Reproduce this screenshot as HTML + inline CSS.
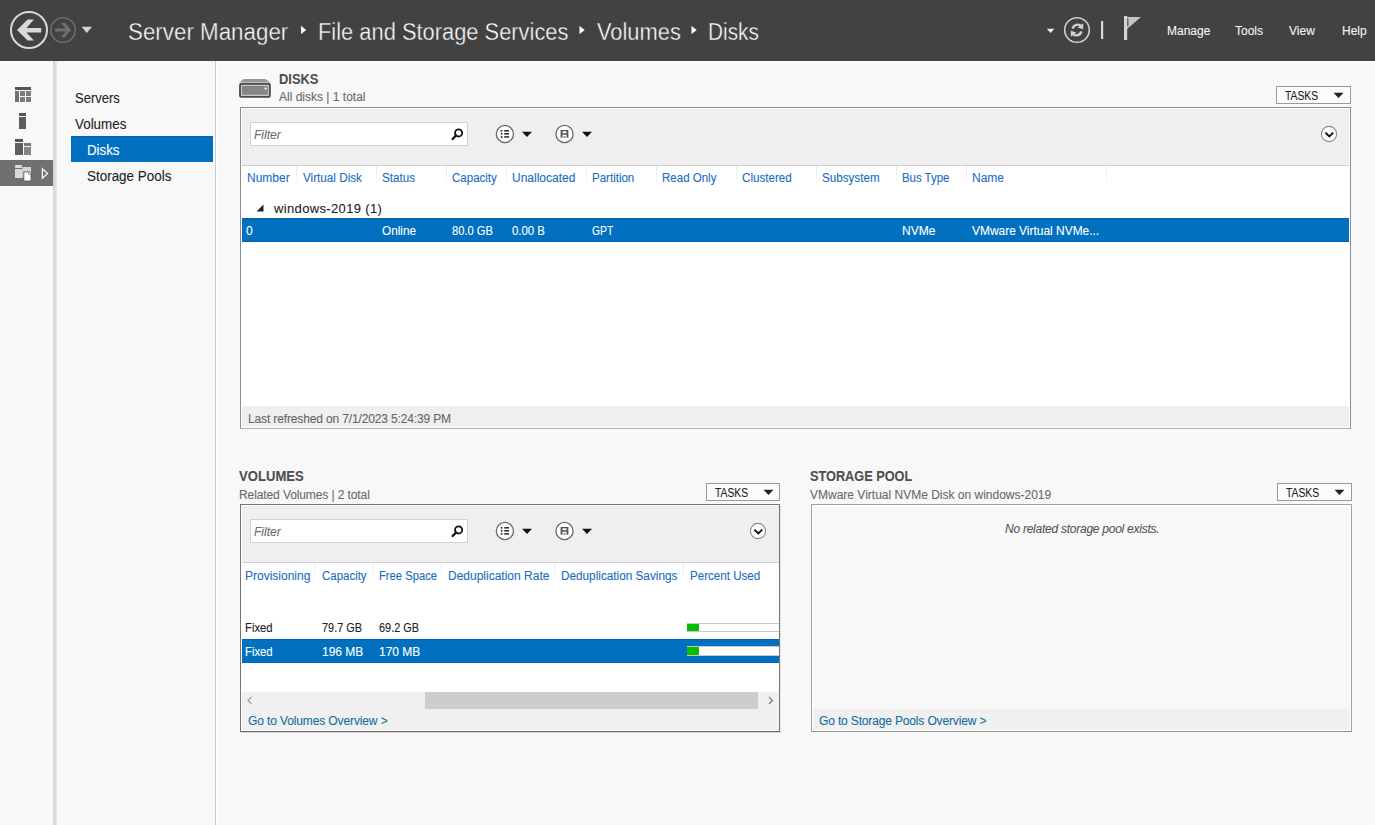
<!DOCTYPE html>
<html><head><meta charset="utf-8"><style>
html,body{margin:0;padding:0}
body{width:1375px;height:825px;overflow:hidden;position:relative;background:#f8f8f8;font-family:"Liberation Sans",sans-serif}
body>div,body>svg{position:absolute;box-sizing:content-box}
.t{white-space:nowrap;line-height:1}
.lt{-webkit-text-stroke:0.35px #424242}
.t:not(.lt){-webkit-text-stroke:0.1px currentColor}
</style></head><body>
<div style="left:0px;top:0px;width:1375px;height:61px;background:#424242;"></div>
<svg style="left:0px;top:0px" width="100" height="61" viewBox="0 0 100 61"><circle cx="29" cy="30" r="18" fill="none" stroke="#d9d9d9" stroke-width="2"/><polygon points="17,30 27.6,19.6 34,19.6 26.4,28 41.2,28 41.2,32.6 26.4,32.6 34,40.4 27.6,40.4" fill="#d9d9d9"/><circle cx="63" cy="30" r="12.3" fill="none" stroke="#6e6e6e" stroke-width="1.6"/><polygon points="71,30 65,22.8 61,22.8 65.5,28.6 55,28.6 55,31.6 65.5,31.6 61,37.2 65,37.2" fill="#6e6e6e"/><polygon points="81.6,26.8 92,26.8 86.8,33" fill="#d6d6d6"/></svg>
<div class="t lt" style="left:128px;top:21px;font-size:23px;color:#fafafa;transform:scaleX(0.972);transform-origin:0 0;">Server Manager</div>
<svg style="left:296px;top:20px" width="14" height="20" viewBox="0 0 14 20"><polygon points="5,5.8 10.2,10 5,14.2" fill="#f6f6f6"/></svg>
<div class="t lt" style="left:318px;top:21px;font-size:23px;color:#fafafa;transform:scaleX(0.951);transform-origin:0 0;">File and Storage Services</div>
<svg style="left:575px;top:20px" width="14" height="20" viewBox="0 0 14 20"><polygon points="4.5,5.8 9.7,10 4.5,14.2" fill="#f6f6f6"/></svg>
<div class="t lt" style="left:597px;top:21px;font-size:23px;color:#fafafa;transform:scaleX(0.95);transform-origin:0 0;">Volumes</div>
<svg style="left:687px;top:20px" width="14" height="20" viewBox="0 0 14 20"><polygon points="4.5,5.8 9.7,10 4.5,14.2" fill="#f6f6f6"/></svg>
<div class="t lt" style="left:708px;top:21px;font-size:23px;color:#fafafa;transform:scaleX(0.904);transform-origin:0 0;">Disks</div>
<svg style="left:1040px;top:0px" width="110" height="61" viewBox="0 0 110 61"><polygon points="6.8,28.8 14.4,28.8 10.6,33" fill="#f0f0f0"/><circle cx="37" cy="30" r="12.3" fill="none" stroke="#d0d0d0" stroke-width="1.6"/><path d="M32.6,28.6 A5.2,5.2 0 0 1 41.3,26.2" fill="none" stroke="#d0d0d0" stroke-width="2.4"/><polygon points="43.2,23.2 43.2,29.2 37.6,27.6" fill="#d0d0d0"/><path d="M41.4,31.4 A5.2,5.2 0 0 1 32.7,33.8" fill="none" stroke="#d0d0d0" stroke-width="2.4"/><polygon points="30.8,36.8 30.8,30.8 36.4,32.4" fill="#d0d0d0"/><rect x="61" y="21" width="2.2" height="18" fill="#d8d8d8"/><rect x="84" y="16" width="3.2" height="24" fill="#d4d4d4"/><polygon points="87,17 101,17 87,29" fill="#c6c6c6"/><rect x="87.2" y="18.2" width="1.2" height="8" fill="#505050"/></svg>
<div class="t " style="left:1167px;top:25px;font-size:12px;color:#f4f4f4;">Manage</div>
<div class="t " style="left:1235px;top:25px;font-size:12px;color:#f4f4f4;">Tools</div>
<div class="t " style="left:1289px;top:25px;font-size:12px;color:#f4f4f4;">View</div>
<div class="t " style="left:1342px;top:25px;font-size:12px;color:#f4f4f4;">Help</div>
<div style="left:53px;top:61px;width:4px;height:764px;background:linear-gradient(to right,#d2d2d2,#e6e6e6);"></div>
<div style="left:0px;top:160px;width:53px;height:26px;background:#707070;"></div>
<svg style="left:0px;top:61px" width="53" height="140" viewBox="0 0 53 140"><rect x="15" y="26" width="16" height="3" fill="#555"/><rect x="15" y="30" width="4" height="11" fill="#707070"/><rect x="20" y="30" width="5" height="5" fill="#7c7c7c"/><rect x="26" y="30" width="5" height="5" fill="#7c7c7c"/><rect x="20" y="36" width="5" height="5" fill="#7c7c7c"/><rect x="26" y="36" width="5" height="5" fill="#7c7c7c"/><rect x="19" y="52" width="7" height="3" fill="#555"/><rect x="19" y="56" width="7" height="12" fill="#5e5e5e"/><rect x="15" y="78" width="8" height="3" fill="#555"/><rect x="15" y="82" width="8" height="12" fill="#5e5e5e"/><rect x="24" y="82" width="7" height="3" fill="#777"/><rect x="24" y="86" width="7" height="8" fill="#858585"/><rect x="15" y="104" width="7" height="3" rx="1" fill="#dadada"/><rect x="22.3" y="106" width="8.7" height="10" fill="#d6d6d6"/><rect x="15" y="108" width="7.6" height="9" fill="#d9d9d9"/><path d="M23.8,110.8 H29.2 L31,112.6 V120 H23.8 Z" fill="#ffffff" stroke="#5c5c5c" stroke-width="0.9"/><circle cx="29.6" cy="112.4" r="1.2" fill="#ffffff" stroke="#6a6a6a" stroke-width="0.8"/><polygon points="42.4,107.8 47.6,112.5 42.4,117.2" fill="none" stroke="#f4f4f4" stroke-width="1.3"/></svg>
<div style="left:215px;top:61px;width:1px;height:764px;background:#cdcdcd;"></div>
<div style="left:216px;top:61px;width:1px;height:764px;background:#fdfdfd;"></div>
<div class="t " style="left:75px;top:91px;font-size:14px;color:#222;transform:scaleX(0.928);transform-origin:0 0;">Servers</div>
<div class="t " style="left:75px;top:117px;font-size:14px;color:#222;transform:scaleX(0.956);transform-origin:0 0;">Volumes</div>
<div style="left:71px;top:136px;width:142px;height:26px;background:#0070bf;border-top:1px solid #0062b2;box-sizing:border-box"></div>
<div class="t " style="left:87px;top:143px;font-size:14px;color:#fff;transform:scaleX(0.95);transform-origin:0 0;">Disks</div>
<div class="t " style="left:87px;top:169px;font-size:14px;color:#222;transform:scaleX(0.96);transform-origin:0 0;">Storage Pools</div>
<svg style="left:235px;top:74px" width="40" height="28" viewBox="0 0 40 28"><path d="M4.3,8.6 L8.8,4.9 H30.2 L35.6,8.6 Z" fill="#989898"/><rect x="4.3" y="8.1" width="31.3" height="0.9" fill="#c4c4c4"/><rect x="4.1" y="9" width="31.7" height="14.7" rx="2" fill="#4a4a4a"/><rect x="5.9" y="10.8" width="28.1" height="11.1" rx="1" fill="#c8c8c8"/><rect x="7" y="11.9" width="26" height="8.9" rx="1" fill="#858585"/><rect x="29.6" y="13.6" width="1.9" height="1.9" fill="#fff"/></svg>
<div class="t " style="left:279px;top:72px;font-size:14px;color:#4e4e4e;font-weight:700;transform:scaleX(0.92);transform-origin:0 0;">DISKS</div>
<div class="t " style="left:279px;top:91px;font-size:12px;color:#6a6a6a;">All disks | 1 total</div>
<div style="left:1276px;top:86px;width:73px;height:16px;border:1px solid #9a9a9a;background:#fbfbfb;"></div>
<div class="t " style="left:1285px;top:90px;font-size:12px;color:#222;transform:scaleX(0.86);transform-origin:0 0;">TASKS</div>
<svg style="left:1333px;top:92px" width="12" height="7" viewBox="0 0 12 7"><polygon points="0.5,0.8 10.5,0.8 5.5,6" fill="#222"/></svg>
<div style="left:240px;top:107px;width:1109px;height:320px;border:1px solid #8c8c8c;border-bottom-color:#b0b0b0;background:#fff;box-shadow:inset 0 0 0 1px #fff"></div>
<div style="left:242px;top:109px;width:1107px;height:56px;background:#efefef;"></div>
<div style="left:242px;top:165px;width:1107px;height:1px;background:#d0d0d0;"></div>
<div style="left:250px;top:122px;width:216px;height:22px;border:1px solid #d2d2d2;background:#fff;"></div>
<div class="t " style="left:254px;top:129px;font-size:12px;color:#6d6d6d;font-style:italic;">Filter</div>
<svg style="left:448px;top:125px" width="18" height="18" viewBox="0 0 18 18"><circle cx="10.6" cy="7.9" r="3.6" fill="none" stroke="#111" stroke-width="1.8"/><line x1="8.2" y1="10.4" x2="4.6" y2="14" stroke="#111" stroke-width="2.3" stroke-linecap="round"/></svg>
<svg style="left:493px;top:122px" width="22" height="22" viewBox="0 0 22 22"><circle cx="11.9" cy="12" r="8.6" fill="#fff" stroke="#6a6a6a" stroke-width="1.3"/><rect x="7.8" y="7.9" width="1.6" height="1.8" fill="#333"/><rect x="11.2" y="8" width="4.8" height="1.6" fill="#333"/><rect x="7.8" y="10.9" width="1.6" height="1.8" fill="#333"/><rect x="11.2" y="11" width="4.8" height="1.6" fill="#333"/><rect x="7.8" y="14.0" width="1.6" height="1.8" fill="#333"/><rect x="11.2" y="14.1" width="4.8" height="1.6" fill="#333"/></svg>
<svg style="left:521px;top:130px" width="12" height="8" viewBox="0 0 12 8"><polygon points="1,1.7 11,1.7 6,7" fill="#111"/></svg>
<svg style="left:553px;top:122px" width="22" height="22" viewBox="0 0 22 22"><circle cx="11.5" cy="12" r="8.6" fill="#fff" stroke="#6a6a6a" stroke-width="1.3"/><path d="M7.6,7.9 h7.8 v7.8 h-7.8 z M9.5,9.3 v2.0 h4.0 v-2.0 z M9.5,12.8 v2.9 h4.0 v-2.9 z" fill="#555" fill-rule="evenodd"/><rect x="10.6" y="14.3" width="1.8" height="1.4" fill="#555"/></svg>
<svg style="left:581px;top:130px" width="12" height="8" viewBox="0 0 12 8"><polygon points="1,1.7 11,1.7 6,7" fill="#111"/></svg>
<svg style="left:1319px;top:124px" width="20" height="20" viewBox="0 0 20 20"><circle cx="10" cy="10" r="7.6" fill="#fdfdfd" stroke="#8a8a8a" stroke-width="1.1"/><polyline points="6.4,8.6 10.3,12.4 14.2,8.6" fill="none" stroke="#111" stroke-width="2"/></svg>
<div style="left:296px;top:166px;width:1px;height:20px;background:linear-gradient(#e6e6e6,#ffffff);"></div>
<div style="left:376px;top:166px;width:1px;height:20px;background:linear-gradient(#e6e6e6,#ffffff);"></div>
<div style="left:446px;top:166px;width:1px;height:20px;background:linear-gradient(#e6e6e6,#ffffff);"></div>
<div style="left:506px;top:166px;width:1px;height:20px;background:linear-gradient(#e6e6e6,#ffffff);"></div>
<div style="left:586px;top:166px;width:1px;height:20px;background:linear-gradient(#e6e6e6,#ffffff);"></div>
<div style="left:656px;top:166px;width:1px;height:20px;background:linear-gradient(#e6e6e6,#ffffff);"></div>
<div style="left:736px;top:166px;width:1px;height:20px;background:linear-gradient(#e6e6e6,#ffffff);"></div>
<div style="left:816px;top:166px;width:1px;height:20px;background:linear-gradient(#e6e6e6,#ffffff);"></div>
<div style="left:896px;top:166px;width:1px;height:20px;background:linear-gradient(#e6e6e6,#ffffff);"></div>
<div style="left:966px;top:166px;width:1px;height:20px;background:linear-gradient(#e6e6e6,#ffffff);"></div>
<div style="left:1106px;top:166px;width:1px;height:20px;background:linear-gradient(#e6e6e6,#ffffff);"></div>
<div class="t " style="left:247px;top:172px;font-size:12px;color:#1c6dbf;">Number</div>
<div class="t " style="left:303px;top:172px;font-size:12px;color:#1c6dbf;transform:scaleX(0.975);transform-origin:0 0;">Virtual Disk</div>
<div class="t " style="left:382px;top:172px;font-size:12px;color:#1c6dbf;transform:scaleX(0.97);transform-origin:0 0;">Status</div>
<div class="t " style="left:452px;top:172px;font-size:12px;color:#1c6dbf;transform:scaleX(0.96);transform-origin:0 0;">Capacity</div>
<div class="t " style="left:512px;top:172px;font-size:12px;color:#1c6dbf;">Unallocated</div>
<div class="t " style="left:592px;top:172px;font-size:12px;color:#1c6dbf;transform:scaleX(0.96);transform-origin:0 0;">Partition</div>
<div class="t " style="left:662px;top:172px;font-size:12px;color:#1c6dbf;transform:scaleX(0.96);transform-origin:0 0;">Read Only</div>
<div class="t " style="left:742px;top:172px;font-size:12px;color:#1c6dbf;transform:scaleX(0.97);transform-origin:0 0;">Clustered</div>
<div class="t " style="left:822px;top:172px;font-size:12px;color:#1c6dbf;transform:scaleX(0.97);transform-origin:0 0;">Subsystem</div>
<div class="t " style="left:902px;top:172px;font-size:12px;color:#1c6dbf;transform:scaleX(0.95);transform-origin:0 0;">Bus Type</div>
<div class="t " style="left:972px;top:172px;font-size:12px;color:#1c6dbf;">Name</div>
<svg style="left:254px;top:202px" width="12" height="12" viewBox="0 0 12 12"><polygon points="9.5,2.5 9.5,9.5 2.5,9.5" fill="#222"/></svg>
<div class="t " style="left:274px;top:202px;font-size:13px;color:#222;letter-spacing:0.35px;">windows-2019 (1)</div>
<div style="left:242px;top:218px;width:1107px;height:24px;background:#0070bf;border-top:1px solid #0062b2;border-bottom:1px solid #0062b2;box-sizing:border-box"></div>
<div class="t " style="left:246px;top:225px;font-size:12px;color:#fff;">0</div>
<div class="t " style="left:382px;top:225px;font-size:12px;color:#fff;transform:scaleX(0.98);transform-origin:0 0;">Online</div>
<div class="t " style="left:452px;top:225px;font-size:12px;color:#fff;transform:scaleX(0.93);transform-origin:0 0;">80.0 GB</div>
<div class="t " style="left:512px;top:225px;font-size:12px;color:#fff;transform:scaleX(0.95);transform-origin:0 0;">0.00 B</div>
<div class="t " style="left:592px;top:225px;font-size:12px;color:#fff;transform:scaleX(0.86);transform-origin:0 0;">GPT</div>
<div class="t " style="left:902px;top:225px;font-size:12px;color:#fff;">NVMe</div>
<div class="t " style="left:972px;top:225px;font-size:12px;color:#fff;transform:scaleX(0.995);transform-origin:0 0;">VMware Virtual NVMe...</div>
<div style="left:242px;top:406px;width:1107px;height:21px;background:#efefef;"></div>
<div class="t " style="left:248px;top:413px;font-size:12px;color:#666;letter-spacing:-0.14px;">Last refreshed on 7/1/2023 5:24:39 PM</div>
<div class="t " style="left:239px;top:469px;font-size:14px;color:#4e4e4e;font-weight:700;transform:scaleX(0.936);transform-origin:0 0;">VOLUMES</div>
<div class="t " style="left:239px;top:489px;font-size:12px;color:#6a6a6a;letter-spacing:-0.1px;">Related Volumes | 2 total</div>
<div style="left:706px;top:483px;width:72px;height:16px;border:1px solid #9a9a9a;background:#fbfbfb;"></div>
<div class="t " style="left:715px;top:487px;font-size:12px;color:#222;transform:scaleX(0.86);transform-origin:0 0;">TASKS</div>
<svg style="left:763px;top:489px" width="12" height="7" viewBox="0 0 12 7"><polygon points="0.5,0.8 10.5,0.8 5.5,6" fill="#222"/></svg>
<div style="left:240px;top:504px;width:538px;height:226px;border:1px solid #757575;border-bottom-color:#6a6a6a;background:#fff;box-shadow:inset 0 0 0 1px #fff"></div>
<div style="left:780px;top:505px;width:1px;height:227px;background:#e6e6e6"></div><div style="left:241px;top:732px;width:541px;height:1px;background:#d8d8d8"></div>
<div style="left:242px;top:506px;width:537px;height:56px;background:#efefef;"></div>
<div style="left:242px;top:562px;width:537px;height:1px;background:#d0d0d0;"></div>
<div style="left:250px;top:519px;width:216px;height:22px;border:1px solid #d2d2d2;background:#fff;"></div>
<div class="t " style="left:254px;top:526px;font-size:12px;color:#6d6d6d;font-style:italic;">Filter</div>
<svg style="left:448px;top:522px" width="18" height="18" viewBox="0 0 18 18"><circle cx="10.6" cy="7.9" r="3.6" fill="none" stroke="#111" stroke-width="1.8"/><line x1="8.2" y1="10.4" x2="4.6" y2="14" stroke="#111" stroke-width="2.3" stroke-linecap="round"/></svg>
<svg style="left:493px;top:519px" width="22" height="22" viewBox="0 0 22 22"><circle cx="11.9" cy="12" r="8.6" fill="#fff" stroke="#6a6a6a" stroke-width="1.3"/><rect x="7.8" y="7.9" width="1.6" height="1.8" fill="#333"/><rect x="11.2" y="8" width="4.8" height="1.6" fill="#333"/><rect x="7.8" y="10.9" width="1.6" height="1.8" fill="#333"/><rect x="11.2" y="11" width="4.8" height="1.6" fill="#333"/><rect x="7.8" y="14.0" width="1.6" height="1.8" fill="#333"/><rect x="11.2" y="14.1" width="4.8" height="1.6" fill="#333"/></svg>
<svg style="left:521px;top:527px" width="12" height="8" viewBox="0 0 12 8"><polygon points="1,1.7 11,1.7 6,7" fill="#111"/></svg>
<svg style="left:553px;top:519px" width="22" height="22" viewBox="0 0 22 22"><circle cx="11.5" cy="12" r="8.6" fill="#fff" stroke="#6a6a6a" stroke-width="1.3"/><path d="M7.6,7.9 h7.8 v7.8 h-7.8 z M9.5,9.3 v2.0 h4.0 v-2.0 z M9.5,12.8 v2.9 h4.0 v-2.9 z" fill="#555" fill-rule="evenodd"/><rect x="10.6" y="14.3" width="1.8" height="1.4" fill="#555"/></svg>
<svg style="left:581px;top:527px" width="12" height="8" viewBox="0 0 12 8"><polygon points="1,1.7 11,1.7 6,7" fill="#111"/></svg>
<svg style="left:748px;top:521px" width="20" height="20" viewBox="0 0 20 20"><circle cx="10" cy="10" r="7.6" fill="#fdfdfd" stroke="#8a8a8a" stroke-width="1.1"/><polyline points="6.4,8.6 10.3,12.4 14.2,8.6" fill="none" stroke="#111" stroke-width="2"/></svg>
<div style="left:315px;top:563px;width:1px;height:20px;background:linear-gradient(#e6e6e6,#ffffff);"></div>
<div style="left:372px;top:563px;width:1px;height:20px;background:linear-gradient(#e6e6e6,#ffffff);"></div>
<div style="left:441px;top:563px;width:1px;height:20px;background:linear-gradient(#e6e6e6,#ffffff);"></div>
<div style="left:554px;top:563px;width:1px;height:20px;background:linear-gradient(#e6e6e6,#ffffff);"></div>
<div style="left:683px;top:563px;width:1px;height:20px;background:linear-gradient(#e6e6e6,#ffffff);"></div>
<div class="t " style="left:245px;top:570px;font-size:12px;color:#1c6dbf;">Provisioning</div>
<div class="t " style="left:322px;top:570px;font-size:12px;color:#1c6dbf;transform:scaleX(0.955);transform-origin:0 0;">Capacity</div>
<div class="t " style="left:379px;top:570px;font-size:12px;color:#1c6dbf;transform:scaleX(0.935);transform-origin:0 0;">Free Space</div>
<div class="t " style="left:448px;top:570px;font-size:12px;color:#1c6dbf;">Deduplication Rate</div>
<div class="t " style="left:561px;top:570px;font-size:12px;color:#1c6dbf;transform:scaleX(0.98);transform-origin:0 0;">Deduplication Savings</div>
<div class="t " style="left:690px;top:570px;font-size:12px;color:#1c6dbf;transform:scaleX(0.965);transform-origin:0 0;">Percent Used</div>
<div class="t " style="left:245px;top:622px;font-size:12px;color:#222;transform:scaleX(0.94);transform-origin:0 0;">Fixed</div>
<div class="t " style="left:322px;top:622px;font-size:12px;color:#222;transform:scaleX(0.91);transform-origin:0 0;">79.7 GB</div>
<div class="t " style="left:379px;top:622px;font-size:12px;color:#222;transform:scaleX(0.91);transform-origin:0 0;">69.2 GB</div>
<div style="left:687px;top:623px;width:92px;height:9px;background:#c8c8c8;"></div>
<div style="left:688px;top:624px;width:91px;height:7px;background:#fff;"></div>
<div style="left:687px;top:624px;width:12px;height:7px;background:#00c000;"></div>
<div style="left:242px;top:639px;width:537px;height:24px;background:#0070bf;border-top:1px solid #0062b2;border-bottom:1px solid #0062b2;box-sizing:border-box"></div>
<div class="t " style="left:245px;top:646px;font-size:12px;color:#fff;transform:scaleX(0.94);transform-origin:0 0;">Fixed</div>
<div class="t " style="left:322px;top:646px;font-size:12px;color:#fff;">196 MB</div>
<div class="t " style="left:379px;top:646px;font-size:12px;color:#fff;">170 MB</div>
<div style="left:687px;top:646px;width:92px;height:10px;background:#c8c8c8;"></div>
<div style="left:688px;top:647px;width:91px;height:8px;background:#fff;"></div>
<div style="left:687px;top:647px;width:12px;height:8px;background:#00c000;"></div>
<div style="left:242px;top:692px;width:537px;height:17px;background:#f0f0f0;"></div>
<div style="left:425px;top:692px;width:333px;height:17px;background:#cdcdcd;"></div>
<svg style="left:244px;top:694px" width="12" height="12" viewBox="0 0 12 12"><polyline points="7.5,3 4,6.5 7.5,10" fill="none" stroke="#999" stroke-width="1.1"/></svg>
<svg style="left:764px;top:694px" width="12" height="12" viewBox="0 0 12 12"><polyline points="5,3 8.5,6.5 5,10" fill="none" stroke="#777" stroke-width="1.1"/></svg>
<div style="left:242px;top:709px;width:537px;height:21px;background:#f0f0f0;"></div>
<div class="t " style="left:248px;top:715px;font-size:12px;color:#14709e;letter-spacing:-0.12px;">Go to Volumes Overview &gt;</div>
<div class="t " style="left:810px;top:469px;font-size:14px;color:#4e4e4e;font-weight:700;transform:scaleX(0.909);transform-origin:0 0;">STORAGE POOL</div>
<div class="t " style="left:810px;top:489px;font-size:12px;color:#6a6a6a;">VMware Virtual NVMe Disk on windows-2019</div>
<div style="left:1277px;top:483px;width:73px;height:16px;border:1px solid #9a9a9a;background:#fbfbfb;"></div>
<div class="t " style="left:1286px;top:487px;font-size:12px;color:#222;transform:scaleX(0.86);transform-origin:0 0;">TASKS</div>
<svg style="left:1334px;top:489px" width="12" height="7" viewBox="0 0 12 7"><polygon points="0.5,0.8 10.5,0.8 5.5,6" fill="#222"/></svg>
<div style="left:811px;top:504px;width:539px;height:226px;border:1px solid #a0a0a0;border-bottom-color:#909090;background:#f8f8f8;box-shadow:inset 0 0 0 1px #fff"></div>
<div class="t " style="left:1005px;top:523px;font-size:12px;color:#555;font-style:italic;letter-spacing:-0.25px;">No related storage pool exists.</div>
<div style="left:813px;top:709px;width:537px;height:21px;background:#f0f0f0;"></div>
<div class="t " style="left:819px;top:715px;font-size:12px;color:#14709e;letter-spacing:-0.15px;">Go to Storage Pools Overview &gt;</div>
</body></html>
